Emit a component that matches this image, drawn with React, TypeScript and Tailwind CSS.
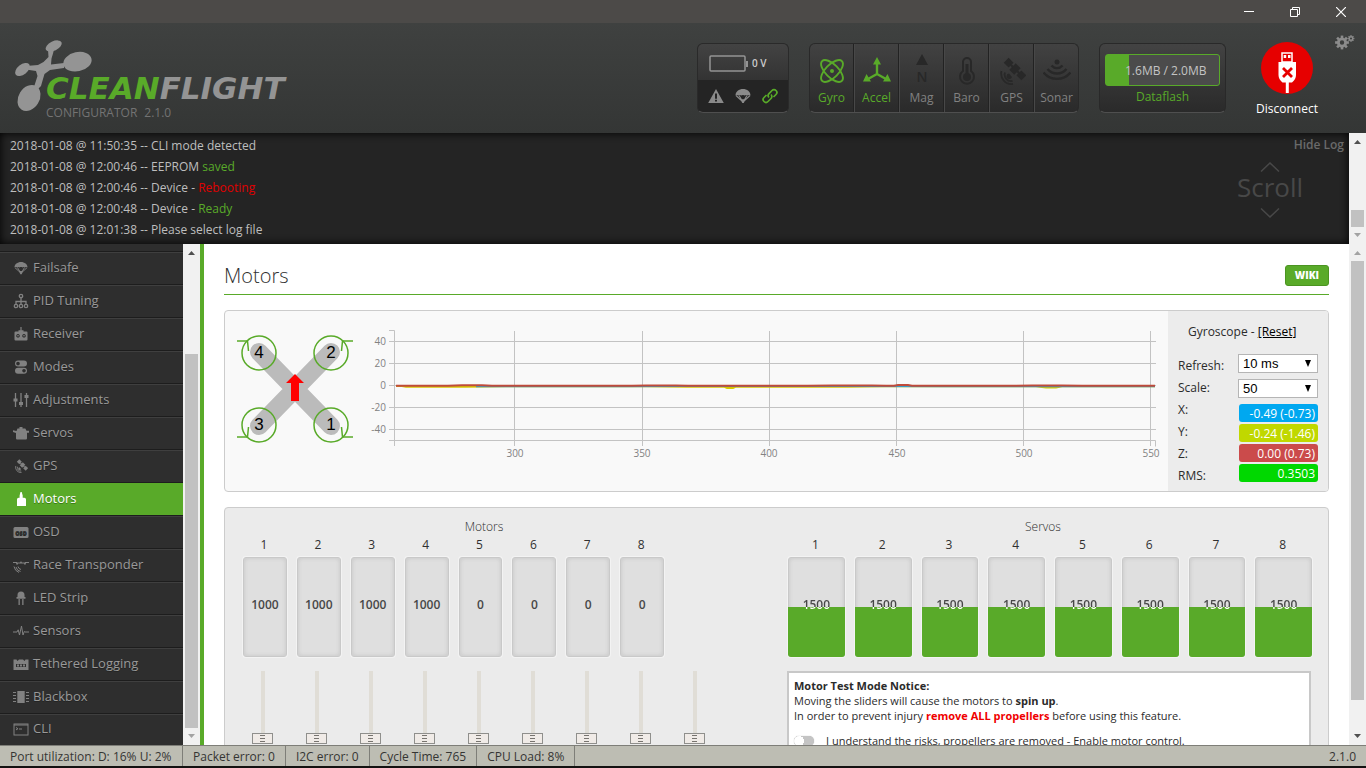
import React, { useState } from "react";

interface IIcon {
  className?: string;
}

/* ---------- Icons ---------- */

const ParachuteIcon = ({ className = "" }: IIcon) => (
  <svg viewBox="0 0 16 16" className={className} fill="currentColor" aria-hidden="true">
    <path d="M.5 7.500C.5 3.500 4 1 8 1s7.500 2.500 7.500 6.500c-.6-.7-2.200-.7-2.800 0-.7-.8-2.300-.8-3 0-.6-.7-2.800-.7-3.400 0-.7-.8-2.300-.8-3 0-.6-.7-2.200-.7-2.800 0z" />
    <path d="M1 7.500 7 13M15 7.500 9 13M4 7.500 7.300 13M12 7.500 8.700 13" fill="none" stroke="currentColor" strokeWidth="1.100" />
    <path d="M5.800 11.300h4.400L8.800 15H7.200z" />
  </svg>
);

const SatelliteIcon = ({ className = "" }: IIcon) => (
  <svg viewBox="0 0 28 28" className={className} fill="currentColor" aria-hidden="true">
    <g transform="rotate(45 17 12)">
      <rect x="4.500" y="8.500" width="7" height="7" />
      <rect x="13.500" y="7.500" width="7" height="9" />
      <rect x="22.500" y="8.500" width="7" height="7" />
      <rect x="11" y="11" width="12" height="2" />
    </g>
    <path d="M11 16.500a2.800 2.800 0 1 0 3 3.500z" />
    <path d="M7 15.500a6.500 6.500 0 0 0 7.500 8.500M3.500 14a10.500 10.500 0 0 0 11.500 13" fill="none" stroke="currentColor" strokeWidth="1.800" />
  </svg>
);

const GyroIcon = () => (
  <svg viewBox="0 0 28 28" className="size-7" fill="none" stroke="currentColor" strokeWidth="1.900" aria-hidden="true">
    <ellipse cx="14" cy="14" rx="14" ry="6.500" transform="rotate(45 14 14)" />
    <ellipse cx="14" cy="14" rx="14" ry="6.500" transform="rotate(-45 14 14)" />
    <circle cx="14" cy="14" r="2" fill="currentColor" stroke="none" />
  </svg>
);

const AccelIcon = () => (
  <svg viewBox="0 0 28 28" className="size-7" fill="currentColor" aria-hidden="true">
    <path d="M14 6v11M14 17 5 22M14 17l9 5" fill="none" stroke="currentColor" strokeWidth="2.400" />
    <path d="M14 0l4 7.500h-8zM0 24.500 3.500 17l4.500 7.500zM28 24.500 24.500 17 20 24.500z" />
  </svg>
);

const MagIcon = () => (
  <svg viewBox="0 0 28 34" className="h-[34px] w-7" fill="currentColor" aria-hidden="true">
    <path d="M14 0l6 11H8z" />
    <text x="14" y="28" textAnchor="middle" fontSize="14" fontFamily="Open Sans" fontWeight="600">N</text>
  </svg>
);

const BaroIcon = () => (
  <svg viewBox="0 0 28 28" className="size-7" fill="none" stroke="currentColor" strokeWidth="2" aria-hidden="true">
    <path d="M10 14V5a4 4 0 0 1 8 0v9a7 7 0 1 1-8 0z" />
    <circle cx="14" cy="20" r="4" fill="currentColor" stroke="none" />
    <path d="M14 18V7" strokeWidth="3" />
  </svg>
);

const SonarIcon = () => (
  <svg viewBox="0 0 28 28" className="size-7" fill="none" stroke="currentColor" strokeWidth="2.400" aria-hidden="true">
    <circle cx="14" cy="5" r="2.500" fill="currentColor" stroke="none" />
    <path d="M8.500 8.500c3 3.500 8 3.500 11 0M4.500 12c5 6 14 6 19 0M.5 15.500c7 8.500 20 8.500 27 0" />
  </svg>
);

const GearShape = ({ cx, cy, r }: { cx: number; cy: number; r: number }) => (
  <g transform={`translate(${cx} ${cy}) scale(${r / 8})`}>
    <circle r="4.500" fill="none" stroke="currentColor" strokeWidth="3.600" />
    {[0, 45, 90, 135, 180, 225, 270, 315].map((a) => (
      <rect key={a} x="-1.600" y="-8.500" width="3.200" height="3" transform={`rotate(${a})`} fill="currentColor" />
    ))}
  </g>
);

// Small icons of the side menu, all drawn on a 16x16 grid
const NavIcon = ({ name }: { name: string }) => {
  if (name === "Failsafe") return <ParachuteIcon className="size-4 p-px" />;
  if (name === "GPS") return <SatelliteIcon className="size-4 p-px" />;
  const line = { fill: "none", stroke: "currentColor" };
  return (
    <svg viewBox="0 0 16 16" className="size-4" fill="currentColor" aria-hidden="true">
      {name === "PID Tuning" && (
        <g {...line} strokeWidth="1.300">
          <circle cx="8" cy="3" r="1.700" />
          <circle cx="3" cy="13" r="1.700" />
          <circle cx="8" cy="13" r="1.700" />
          <circle cx="13" cy="13" r="1.700" />
          <path d="M8 4.700v6.600M3 11.300V8.500h10v2.800" />
        </g>
      )}
      {name === "Receiver" && (
        <>
          <path fillRule="evenodd" d="M2.500 5.500h11a1 1 0 0 1 1 1v7a1 1 0 0 1-1 1h-11a1 1 0 0 1-1-1v-7a1 1 0 0 1 1-1zM5 8a1.800 1.800 0 1 0 .01 0zm6 0a1.800 1.800 0 1 0 .01 0z" />
          <circle cx="5" cy="9.800" r=".8" />
          <circle cx="11" cy="9.800" r=".8" />
          <path d="M7.400 1h1.200v5H7.400zM5.500 4.300h5v2h-5z" />
        </>
      )}
      {name === "Modes" && (
        <path fillRule="evenodd" d="M5 1.500h6a3 3 0 0 1 0 6H5a3 3 0 0 1 0-6zm0 1.200a1.800 1.800 0 1 0 .01 0zM5 8.700h6a3 3 0 0 1 0 6H5a3 3 0 0 1 0-6zm6 1.200a1.800 1.800 0 1 0 .01 0z" />
      )}
      {name === "Adjustments" && (
        <>
          <path d="M2.500 1v14M8 1v14M13.500 1v14" {...line} strokeWidth="1.300" />
          <path d="M.5 6.500h4v3h-4zM6 10h4v3H6zM11.500 3h4v3h-4z" />
        </>
      )}
      {name === "Servos" && <path d="M6.500 2h3v1.500h2.800l1.200 2.200H16v2h-2v5.800a1 1 0 0 1-1 1H4a1 1 0 0 1-1-1V8L0 7V5.200l3.500.8 1-2.500h2z" />}
      {name === "Motors" && <path d="M7.500 1h1.200l1 3.500v2.200h1.600c.9 0 1.700.8 1.700 1.700V15H4V8.400c0-.9.8-1.700 1.700-1.700h.9V4.500z" />}
      {name === "OSD" && (
        <>
          <rect x=".5" y="3" width="15" height="11" rx="1.500" />
          <text x="8" y="10.500" textAnchor="middle" fontSize="5.500" fontWeight="800" fontFamily="Open Sans" fill="#2e2e2e">OSD</text>
        </>
      )}
      {name === "Race Transponder" && (
        <>
          <path d="M0 5h4v.6h3l.6-1.100h.8l.6 1.100h3V5h4v.9h-3l-.6 1.800h-.9l-.5-1.100H5L4.500 7.700h-.9L3 5.900H0z" />
          <path d="M5 9.500a4 4 0 0 0 3 3M3 10a6 6 0 0 0 4.500 4.500M1 9.500a8 8 0 0 0 5 6" {...line} />
        </>
      )}
      {name === "LED Strip" && <path d="M4.500 5a3.500 3.500 0 0 1 7 0v2h1v1.800h-9V7h1zM5.500 9h1.300v6H5.500zM9.200 9h1.300v6H9.200z" />}
      {name === "Sensors" && <path d="M0 9h4l1.200-2.200L6.500 12l2-9 1.500 9 1.300-3.500L12 9h4" {...line} />}
      {name === "Tethered Logging" && (
        <>
          <path fillRule="evenodd" d="M.5 3.500h3l1 1.500 1.500-1.500h4L11.500 5l1-1.500h3V14H.5zM3 8v3h10V8z" />
          <path d="M4 8.500h2v2H4zM7 8.500h2v2H7zM10 8.500h2v2h-2z" />
        </>
      )}
      {name === "Blackbox" && (
        <>
          <rect x="4.300" y="2" width="7.400" height="12" />
          <path d="M0 3.500h3M0 6.500h3M0 9.500h3M0 12.500h3M13 3.500h3M13 6.500h3M13 9.500h3M13 12.500h3" {...line} strokeWidth="1.200" />
        </>
      )}
      {name === "CLI" && (
        <>
          <rect x="1" y="3" width="14" height="11" {...line} />
          <path d="M1 4h14M3 6.500l2 1.200-2 1.200M6 8h3" {...line} />
        </>
      )}
    </svg>
  );
};

/* ---------- Shared ---------- */

interface IScroll {
  thumbStart: string;
  thumbSize: string;
  upDim?: boolean;
  downDim?: boolean;
}

const ScrollRail: React.FC<IScroll> = ({ thumbStart, thumbSize, upDim, downDim }) => (
  <div className="flex w-[17px] shrink-0 flex-col items-center justify-between bg-[#f1f1f1]">
    <svg viewBox="0 0 17 17" className="size-[17px]" aria-hidden="true">
      <path d="M5 11h7L8.500 7z" fill={upDim ? "#a3a3a3" : "#505050"} />
    </svg>
    <div className="flex w-[13px] grow flex-col">
      <div className={thumbStart} />
      <div className={`bg-[#c1c1c1] ${thumbSize}`} />
    </div>
    <svg viewBox="0 0 17 17" className="size-[17px]" aria-hidden="true">
      <path d="M5 6h7l-3.500 4z" fill={downDim ? "#a3a3a3" : "#505050"} />
    </svg>
  </div>
);

/* ---------- Header ---------- */

const TitleBar = () => (
  <div className="flex h-[23px] shrink-0 justify-end bg-[#4c4a48] pr-[2px] text-white">
    <button aria-label="Minimize" className="flex w-[46px] items-center justify-center">
      <svg viewBox="0 0 10 10" className="size-[10px]" stroke="currentColor"><path d="M0 4.500h10" /></svg>
    </button>
    <button aria-label="Restore" className="flex w-[46px] items-center justify-center">
      <svg viewBox="0 0 10 10" className="size-[10px]" fill="none" stroke="currentColor"><path d="M.5 2.500h7v7h-7zM2.500 2.500v-2h7v7h-2" /></svg>
    </button>
    <button aria-label="Close" className="flex w-[46px] items-center justify-center">
      <svg viewBox="0 0 10 10" className="size-[10px]" stroke="currentColor" strokeWidth="1.200"><path d="M0 0l10 10M10 0 0 10" /></svg>
    </button>
  </div>
);

const Logo = () => (
  <svg viewBox="0 0 290 90" className="h-[90px] w-[290px]" role="img" aria-label="Cleanflight Configurator 2.1.0">
    <g fill="#949494">
      <ellipse cx="53.700" cy="10" rx="8.700" ry="4.600" transform="rotate(-26 53.700 10)" />
      <ellipse cx="77.500" cy="25.700" rx="14.300" ry="9.600" transform="rotate(-12 77.500 25.700)" />
      <ellipse cx="22.500" cy="33.500" rx="8.500" ry="5" transform="rotate(-38 22.500 33.500)" />
      <ellipse cx="29" cy="62" rx="13.800" ry="10.500" transform="rotate(-58 29 62)" />
      <path d="M48 13.500h6l-1 4-1.500 5-.5 6 13-1.500v5l-14 2-5.500 4-1.500 5-2 7-4 4h-4l4.500-14-1.500-5-10-1.500V30l12-1 5.500-3 5-5z" />
    </g>
    <text x="46" y="63" fontSize="31" fontWeight="700" fontStyle="italic" fontFamily="DejaVu Sans" fill="#949494">
      <tspan fill="#59aa29">CLEAN</tspan>FLIGHT
    </text>
    <text x="46" y="81" fontSize="12" fontFamily="Open Sans" fill="#737373" xmlSpace="preserve">
      CONFIGURATOR<tspan dx="7">2.1.0</tspan>
    </text>
  </svg>
);

const sensors = [
  { name: "Gyro", icon: <GyroIcon />, on: true },
  { name: "Accel", icon: <AccelIcon />, on: true },
  { name: "Mag", icon: <MagIcon />, on: false },
  { name: "Baro", icon: <BaroIcon />, on: false },
  { name: "GPS", icon: <SatelliteIcon className="size-7" />, on: false },
  { name: "Sonar", icon: <SonarIcon />, on: false },
];

const Header = () => (
  <header className="flex h-[110px] shrink-0 justify-between bg-linear-to-b from-[#3f4140] to-[#343635]">
    <div className="pt-[13px]">
      <Logo />
    </div>
    <div className="flex items-start pt-[20px] pr-[11px]">
      <div className="flex h-[70px] w-[92px] flex-col overflow-hidden rounded-md border border-[#2a2a2a] border-b-[#4f4f4f] bg-[#242424]">
        <div className="flex h-9 items-center bg-linear-to-b from-[#434343] to-[#333] pt-[3px] pl-[11px]">
          <svg viewBox="0 0 40 18" className="h-[18px] w-10" fill="none" aria-hidden="true">
            <rect x="1" y="1" width="35" height="15" rx="1" stroke="#949494" strokeWidth="1.500" />
            <rect x="37" y="6" width="2" height="6" fill="#949494" />
          </svg>
          <span className="ml-[3px] text-[10px] font-semibold text-[#ccc]">0 V</span>
        </div>
        <div className="flex grow items-center justify-around px-1 text-[#8a8a8a]">
          <svg viewBox="0 0 16 16" className="size-4" fill="currentColor" aria-hidden="true">
            <path fillRule="evenodd" d="M8 1l7.800 14H.2zM7 5.500v5.200h2V5.500zm0 6.200v1.800h2v-1.800z" />
          </svg>
          <ParachuteIcon className="size-4" />
          <svg viewBox="0 0 16 16" className="size-4" fill="none" stroke="#59aa29" strokeWidth="1.700" aria-hidden="true">
            <path d="M7 9.500A2.800 2.800 0 0 1 7 5.600L10 2.500a2.800 2.800 0 0 1 4 4L11.500 9M9 6.500a2.800 2.800 0 0 1 0 4L6 13.500a2.800 2.800 0 0 1-4-4L4.500 7" />
          </svg>
        </div>
      </div>

      <ul className="ml-5 flex h-[70px] overflow-hidden rounded-md border border-[#292929] border-b-[#4f4f4f] bg-linear-to-b from-[#424242] to-[#2a2a2a]">
        {sensors.map((s) => (
          <li
            key={s.name}
            className="flex w-[45px] flex-col items-center border-r border-l border-r-[#222] border-l-[#484848] pt-[10px] text-xs first:w-11 first:border-l-0 last:w-11 last:border-r-0"
          >
            <span className={`flex h-[34px] items-center ${s.on ? "text-[#59aa29]" : "text-[#282828]"}`}>{s.icon}</span>
            <span className={`mt-[2px] leading-4 ${s.on ? "text-[#59aa29]" : "text-[#818181]"}`}>{s.name}</span>
          </li>
        ))}
      </ul>

      <div className="ml-5 flex h-[70px] w-[127px] flex-col items-center rounded-md border border-[#292929] border-b-[#4f4f4f] bg-linear-to-b from-[#434343] to-[#2a2a2a] px-[5px] pt-[10px]">
        <div className="flex h-8 w-full items-center rounded-[3px] border border-[#59aa29] bg-[#4b4b4b]">
          <div className="h-full w-[23px] bg-[#59aa29]" />
          <div className="-ml-[4px] pt-px text-xs text-[#c4c4c4]">1.6MB / 2.0MB</div>
        </div>
        <div className="mt-[3px] text-xs text-[#59aa29]">Dataflash</div>
      </div>

      <button className="ml-[30px] flex w-[62px] flex-col items-center text-xs font-semibold text-white">
        <svg viewBox="0 0 52 52" className="-mt-px size-[52px]" aria-hidden="true">
          <circle cx="26" cy="26" r="26" fill="#e60000" />
          <path d="M21 11h10v9H21z" fill="none" stroke="#fff" strokeWidth="1.500" />
          <path d="M22.700 13h2.500v3h-2.500zM27 13h2.500v3H27zM17.500 20h17.500v13q0 4-4 7.500h-3.200V51h-3V40.500h-3.300q-4-3.500-4-7.500z" fill="#fff" />
          <path d="M22 26l9 9M31 26l-9 9" stroke="#e60000" strokeWidth="2.800" />
        </svg>
        <span className="mt-[7px] leading-4 font-medium">Disconnect</span>
      </button>

      <button aria-label="Options" className="-mt-[9px] ml-[17px] text-[#8c8c8c]">
        <svg viewBox="0 0 20 16" className="h-4 w-5">
          <GearShape cx={7} cy={8.500} r={6.500} />
          <GearShape cx={16} cy={4.500} r={3.200} />
        </svg>
      </button>
    </div>
  </header>
);

/* ---------- Log ---------- */

const logLines = [
  { time: "11:50:35", text: "CLI mode detected", status: "", color: "" },
  { time: "12:00:46", text: "EEPROM ", status: "saved", color: "text-[#59aa29]" },
  { time: "12:00:46", text: "Device - ", status: "Rebooting", color: "text-[#e00000]" },
  { time: "12:00:48", text: "Device - ", status: "Ready", color: "text-[#59aa29]" },
  { time: "12:01:38", text: "Please select log file", status: "", color: "" },
];

const LogPanel = () => (
  <div className="flex h-[111px] shrink-0 bg-[#242424]">
    <div className="flex grow justify-between shadow-[inset_0_0_8px_#000]">
      <ul className="pt-[2px] pl-[10px] text-xs leading-[21px] text-[#bebebe]">
        {logLines.map((l, i) => (
          <li key={i}>
            2018-01-08 @ {l.time} -- {l.text}
            <span className={l.color}>{l.status}</span>
          </li>
        ))}
      </ul>
      <div className="flex w-[158px] flex-col items-center text-[#484848]">
        <button className="mt-[3px] mr-[5px] self-end text-xs leading-[18px] font-semibold text-[#6a6a6a]">Hide Log</button>
        <svg viewBox="0 0 20 10" className="mt-2 h-[10px] w-5" fill="none" stroke="currentColor" strokeWidth="1.500"><path d="M1 9.500 10 1l9 8.500" /></svg>
        <span className="text-[26px] leading-[30px]">Scroll</span>
        <svg viewBox="0 0 20 10" className="mt-[6px] h-[10px] w-5" fill="none" stroke="currentColor" strokeWidth="1.500"><path d="M1 .5 10 9l9-8.500" /></svg>
      </div>
    </div>
    <ScrollRail thumbStart="h-[60px]" thumbSize="h-[17px]" downDim />
  </div>
);

/* ---------- Side menu ---------- */

const tabs = [
  "Failsafe", "PID Tuning", "Receiver", "Modes", "Adjustments", "Servos", "GPS", "Motors",
  "OSD", "Race Transponder", "LED Strip", "Sensors", "Tethered Logging", "Blackbox", "CLI",
];

const SideMenu = () => {
  const [active, setActive] = useState("Motors");
  return (
    <nav className="flex w-[200px] shrink-0 bg-[#2e2e2e]">
      <ul className="w-[183px] overflow-hidden">
        <li className="h-2 border-b border-[#1d1d1d]" />
        {tabs.map((t) => (
          <li key={t} className="group">
            <a
              href="#"
              onClick={() => setActive(t)}
              className={`flex h-[33px] items-center gap-1 border-t border-b border-b-[#1d1d1d] pb-[2px] pl-[13px] text-[13px] group-last:h-[31px] group-last:border-b-0 ${
                t === active
                  ? "border-t-[#59aa29] bg-[#59aa29] text-white [text-shadow:0_1px_#3a7a15]"
                  : "border-t-[#3f3f3f] text-[#999] [text-shadow:0_1px_#222]"
              }`}
            >
              <span className={t === active ? "text-white" : "text-[#818181]"}><NavIcon name={t} /></span>
              <span className={t === active ? "font-medium" : ""}>{t}</span>
            </a>
          </li>
        ))}
      </ul>
      <ScrollRail thumbStart="h-[93px]" thumbSize="h-[374px]" downDim />
    </nav>
  );
};

/* ---------- Motors tab ---------- */

const QuadPreview = () => (
  <svg viewBox="0 0 118 118" className="mt-[18px] h-[118px] w-[118px] shrink-0" role="img" aria-label="Quad X">
    <path d="M22 23l72 74M94 23 22 97" stroke="#bbb" strokeWidth="18" strokeLinecap="round" />
    <path d="M58 45l9 9h-5v18h-8V54h-5z" fill="#f00" />
    <g fill="none" stroke="#59aa29" strokeWidth="1.500">
      <circle cx="22" cy="24" r="17" />
      <circle cx="94" cy="24" r="17" />
      <circle cx="22" cy="96" r="17" />
      <circle cx="94" cy="96" r="17" />
      <path d="M0 12h10.500l1 10M116 12h-10.500l-1 10M0 108h10.500l1-10M116 108h-10.500l-1-10" />
    </g>
    <g fontSize="17" fontFamily="Liberation Sans" textAnchor="middle" fill="#000">
      <text x="22" y="29">4</text>
      <text x="94" y="29">2</text>
      <text x="22" y="101">3</text>
      <text x="94" y="101">1</text>
    </g>
  </svg>
);

const GyroChart = () => (
  <svg viewBox="0 0 802 160" className="mt-[11px] ml-[11px] min-w-0 grow self-start" role="img" aria-label="Gyroscope graph">
    <g stroke="#c3c3c3" fill="none">
      {[20, 42, 64, 86, 108].map((y) => (
        <path key={y} d={`M23 ${y - 0.500}H790`} />
      ))}
      {[148.500, 276.500, 403.500, 530.500, 657.500, 784.500].map((x) => (
        <path key={x} d={`M${x} 9V124`} />
      ))}
      <path d="M23 8.500h5.500V124M23 118.500h766.500v6" />
    </g>
    <path d="M30 64h6l4 .7h60l40-.5h140l40 .5h38l3 1.300h6l3-1.300h110l40-.5h150l10 1.300h10l6-1.300H789" stroke="#d8c800" strokeWidth="2" fill="none" />
    <path d="M110 64.500h150l60-.2h150l110 .2h80H789" stroke="#3b9cc8" strokeWidth="1.500" fill="none" />
    <path d="M30 63.800h52l14-.5h20l10 .5h140l14-.4h30l12 .4h120l24-.4h40l14 .4h8l4-.8h10l4 .8h100l20-.4h30l20 .4H789" stroke="#c04b3a" strokeWidth="2" fill="none" />
    <g fontSize="10" fontFamily="Open Sans" fill="#828282" textAnchor="end">
      <text x="20" y="23">40</text>
      <text x="20" y="45">20</text>
      <text x="20" y="67">0</text>
      <text x="20" y="89">-20</text>
      <text x="20" y="111">-40</text>
    </g>
    <g fontSize="10" fontFamily="Open Sans" fill="#828282" textAnchor="middle">
      <text x="149" y="135">300</text>
      <text x="276" y="135">350</text>
      <text x="403" y="135">400</text>
      <text x="531" y="135">450</text>
      <text x="658" y="135">500</text>
      <text x="785" y="135">550</text>
    </g>
  </svg>
);

const readings = [
  { value: "-0.49 (-0.73)", color: "bg-[#00a8f0]" },
  { value: "-0.24 (-1.46)", color: "bg-[#c0d800]" },
  { value: "0.00 (0.73)", color: "bg-[#cb4b4b]" },
  { value: "0.3503", color: "bg-[#00d800]" },
];

const selectClass =
  "h-[19px] w-20 appearance-none border border-[#b5b5b5] bg-white pl-1 font-['Liberation_Sans',sans-serif] text-[13px] leading-4 text-black";

const SelectBox = ({ id, value, options }: { id: string; value: string; options: string[] }) => (
  <div className="relative h-[19px]">
    <select id={id} defaultValue={value} className={selectClass}>
      {options.map((o) => (
        <option key={o}>{o}</option>
      ))}
    </select>
    <svg viewBox="0 0 8 8" className="pointer-events-none absolute top-[6px] right-[6px] size-2" aria-hidden="true">
      <path d="M1 0h6L4 7z" fill="#000" />
    </svg>
  </div>
);

const GyroPanel = () => (
  <div className="w-40 shrink-0 bg-[#ececec] pt-[13px] pl-[10px] text-xs text-[#2b2b2b]">
    <div className="pl-[10px] leading-4">
      Gyroscope - <a href="#" className="text-black underline">[Reset]</a>
    </div>
    <div className="flex">
      <div className="mt-[15px] w-[60px] leading-[22px]">
        <label htmlFor="refresh" className="block">Refresh:</label>
        <label htmlFor="scale" className="block">Scale:</label>
        <div>X:</div>
        <div>Y:</div>
        <div>Z:</div>
        <div>RMS:</div>
      </div>
      <div className="mt-[14px] w-20">
        <SelectBox id="refresh" value="10 ms" options={["10 ms", "20 ms", "50 ms", "100 ms"]} />
        <div className="h-[6px]" />
        <SelectBox id="scale" value="50" options={["25", "50", "100", "200"]} />
        <div className="mt-[6px] ml-px flex flex-col gap-[2px]">
          {readings.map((r) => (
            <div key={r.value} className={`h-[18px] rounded-[3px] pr-[3px] text-right leading-[19px] text-white ${r.color}`}>
              {r.value}
            </div>
          ))}
        </div>
      </div>
    </div>
  </div>
);

const motorValues = [1000, 1000, 1000, 1000, 0, 0, 0, 0];
const servoValues = [1500, 1500, 1500, 1500, 1500, 1500, 1500, 1500];

const barClass =
  "relative flex h-[100px] items-center justify-center rounded-[3px] border border-[#c9c9c9] bg-[#dfdfdf] shadow-[inset_0_0_4px_#c4c4c4,0_0_0_1px_#f3f3f3]";

const MotorsPanel = () => (
  <section className="w-[482px]">
    <h2 className="text-center text-xs leading-4 font-light">Motors</h2>
    <div className="mt-[2px] grid grid-cols-9 gap-x-[10px] pr-[7px] text-xs">
      {motorValues.map((v, i) => (
        <div key={i}>
          <div className="mb-1 pr-[2px] text-center leading-4">{i + 1}</div>
          <div className={barClass}>
            <span className="mb-1 leading-4 font-semibold text-[#474747]">{v}</span>
          </div>
        </div>
      ))}
    </div>
    <div className="mt-[14px] ml-[9px] flex gap-[33px]">
      {[...motorValues, 1000].map((_, i) => (
        <input
          key={i}
          type="range"
          min={1000}
          max={2000}
          defaultValue={1000}
          aria-label={i < 8 ? `Motor ${i + 1}` : "Master"}
          className="h-[73px] w-[21px] appearance-none bg-[linear-gradient(#e0ddd6,#e0ddd6)] bg-[length:4px_70px] bg-top bg-no-repeat [direction:rtl] [writing-mode:vertical-lr] [&::-webkit-slider-thumb]:h-[11px] [&::-webkit-slider-thumb]:w-[21px] [&::-webkit-slider-thumb]:appearance-none [&::-webkit-slider-thumb]:border [&::-webkit-slider-thumb]:border-[#8f8f8c] [&::-webkit-slider-thumb]:bg-[#f0ebe7] [&::-webkit-slider-thumb]:bg-[repeating-linear-gradient(#77746f_0_1px,transparent_1px_3px)] [&::-webkit-slider-thumb]:bg-[length:5px_7px] [&::-webkit-slider-thumb]:bg-center [&::-webkit-slider-thumb]:bg-no-repeat"
        />
      ))}
    </div>
  </section>
);

const ServosPanel = () => (
  <section className="w-[524px]">
    <h2 className="pr-[14px] text-center text-xs leading-4 font-light">Servos</h2>
    <div className="mt-[2px] grid grid-cols-8 gap-x-[10px] text-xs">
      {servoValues.map((v, i) => (
        <div key={i}>
          <div className="mb-1 pr-[2px] text-center leading-4">{i + 1}</div>
          <div className={barClass}>
            <div className="absolute -inset-x-px -bottom-px rounded-b-[3px] bg-[#59aa29]" style={{ height: `calc(${(v - 1000) / 10}% + 1px)` }} />
            <span className="relative mb-1 bg-[linear-gradient(#474747_10px,#fff_10px)] bg-clip-text leading-4 font-semibold text-transparent">
              {v}
            </span>
          </div>
        </div>
      ))}
    </div>
    <div className="mt-[14px] -ml-px w-[524px] border-2 border-[#c8c8c8] bg-white px-[5px] pt-[5px] pb-4 text-[11px] leading-[15px] text-[#2b2b2b]">
      <p className="font-bold">Motor Test Mode Notice:</p>
      <p>Moving the sliders will cause the motors to <b>spin up</b>.</p>
      <p>
        In order to prevent injury <b className="text-[#f00000]">remove ALL propellers</b> before using this feature.
      </p>
      <label className="mt-[10px] flex items-center gap-3">
        <input
          type="checkbox"
          className="h-[10px] w-5 appearance-none rounded-full bg-[#c4c4c4] bg-[radial-gradient(circle_at_5px_5px,#fff_5px,transparent_5px)] shadow-[0_0_1px_#aaa]"
        />
        I understand the risks, propellers are removed - Enable motor control.
      </label>
    </div>
  </section>
);

const MotorsTab = () => (
  <main className="min-w-0 grow overflow-hidden border-l-4 border-[#59aa29] bg-white px-5 text-[#303030]">
    <div className="flex h-[51px] items-center justify-between border-b border-[#59aa29] pt-[13px]">
      <h1 className="text-xl font-light">Motors</h1>
      <a href="#" className="h-[21px] rounded-[3px] border border-[#4b9421] bg-[#59aa29] px-[9px] text-[10px] leading-[19px] font-extrabold text-white">
        WIKI
      </a>
    </div>
    <div className="mt-[15px] flex h-[182px] overflow-hidden rounded border border-[#ccc] bg-[#f9f9f9] pl-3">
      <QuadPreview />
      <GyroChart />
      <GyroPanel />
    </div>
    <div className="mt-[15px] flex justify-between rounded border border-[#ccc] bg-[#ebebeb] pt-[11px] pr-4 pb-4 pl-[18px]">
      <MotorsPanel />
      <ServosPanel />
    </div>
  </main>
);

/* ---------- Status bar ---------- */

const statusItems = ["Port utilization: D: 16% U: 2%", "Packet error: 0", "I2C error: 0", "Cycle Time: 765", "CPU Load: 8%"];

const StatusBar = () => (
  <footer className="flex h-[23px] shrink-0 border-t border-b-2 border-t-[#7e7e78] border-b-[#141211] bg-[#bdbdb3] text-xs leading-[21px] text-[#353533]">
    {statusItems.map((s, i) => (
      <div key={s} className={`border-r border-[#7e7e78] pl-[10px] ${i === 0 ? "w-[183px]" : "pr-[10px]"}`}>{s}</div>
    ))}
    <div className="ml-auto pr-[10px]">2.1.0</div>
  </footer>
);

export default function App() {
  return (
    <div className="flex h-screen flex-col overflow-hidden font-['Open_Sans','Noto_Sans',sans-serif]">
      <TitleBar />
      <Header />
      <LogPanel />
      <div className="flex min-h-0 grow">
        <SideMenu />
        <MotorsTab />
        <ScrollRail thumbStart="h-0" thumbSize="h-[439px]" upDim />
      </div>
      <StatusBar />
    </div>
  );
}
